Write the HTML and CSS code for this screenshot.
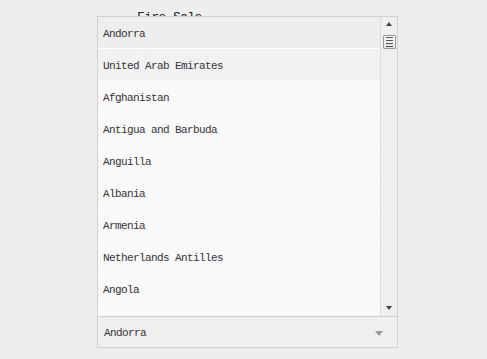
FILE: index.html
```html
<!DOCTYPE html>
<html lang="en">
<head>
  <meta charset="UTF-8" />
  <title>Country Select</title>
  <link rel="stylesheet" href="styles.css">
</head>
<body>
  <div class="field">
    <div class="field-label">Fire Sale</div>
    <div class="dropdown">
      <div class="list-wrap">
        <ul class="options">
          <li class="option selected">Andorra</li>
          <li class="option hover">United Arab Emirates</li>
          <li class="option">Afghanistan</li>
          <li class="option">Antigua and Barbuda</li>
          <li class="option">Anguilla</li>
          <li class="option">Albania</li>
          <li class="option">Armenia</li>
          <li class="option">Netherlands Antilles</li>
          <li class="option">Angola</li>
          <li class="option"></li>
        </ul>
        <div class="scrollbar">
          <span class="arrow up"></span>
          <span class="thumb"><i></i><i></i><i></i><i></i></span>
          <span class="track"></span>
          <span class="arrow down"></span>
        </div>
      </div>
      <div class="select">
        <span>Andorra</span>
        <span class="caret"></span>
      </div>
    </div>
  </div>
</body>
</html>
```

FILE: styles.css
```css
body {
  margin: 0;
  background-color: #eeeeee;
  font-family: "Liberation Mono", "Noto Sans CJK SC", monospace;
  font-size: 11px;
  letter-spacing: -0.6px;
  color: #333;
}

.field {
  margin-left: 97px;
  width: 301px;
}

.field-label {
  height: 16px;
  line-height: 36px;
  padding-left: 40px;
  overflow: hidden;
  font-size: 13px;
  color: #222;
}

.dropdown {
  border: 1px solid #cfcfcf;
  background-color: #efefef;
}

.list-wrap {
  display: flex;
  height: 299px;
  border-bottom: 1px solid #cfcfcf;
}

.options {
  list-style: none;
  margin: 0;
  padding: 0;
  flex: 1;
  overflow: hidden;
}

.option {
  height: 31px;
  line-height: 34px;
  padding-left: 5px;
  background-color: #f9f9f9;
  border-bottom: 1px solid #ffffff;
}

.option.selected {
  background-color: #eeeeee;
}

.option.hover {
  background-color: #f1f1f1;
  border-bottom-color: #f6f6f6;
}

.scrollbar {
  width: 16px;
  border-left: 1px solid #dcdcdc;
  background-color: #efefef;
  display: flex;
  flex-direction: column;
  align-items: center;
}

.arrow {
  width: 0;
  height: 0;
  border-left: 3px solid transparent;
  border-right: 3px solid transparent;
}

.arrow.up {
  margin-top: 5px;
  border-bottom: 4px solid #444;
}

.arrow.down {
  margin-bottom: 6px;
  border-top: 4px solid #444;
}

.thumb {
  margin-top: 9px;
  width: 11px;
  height: 12px;
  border: 1px solid #9a9a9a;
  border-radius: 1px;
  background: linear-gradient(#fdfdfd, #dedede);
  display: flex;
  flex-direction: column;
  justify-content: center;
  align-items: center;
  gap: 2px;
}

.thumb i {
  width: 7px;
  height: 1px;
  background-color: #555;
}

.track {
  flex: 1;
}

.select {
  height: 30px;
  display: flex;
  align-items: center;
  justify-content: space-between;
  padding: 2px 14px 0 6px;
  box-sizing: border-box;
  background-color: #efefef;
}

.caret {
  width: 0;
  height: 0;
  border-left: 4px solid transparent;
  border-right: 4px solid transparent;
  border-top: 5px solid #999;
}
```
